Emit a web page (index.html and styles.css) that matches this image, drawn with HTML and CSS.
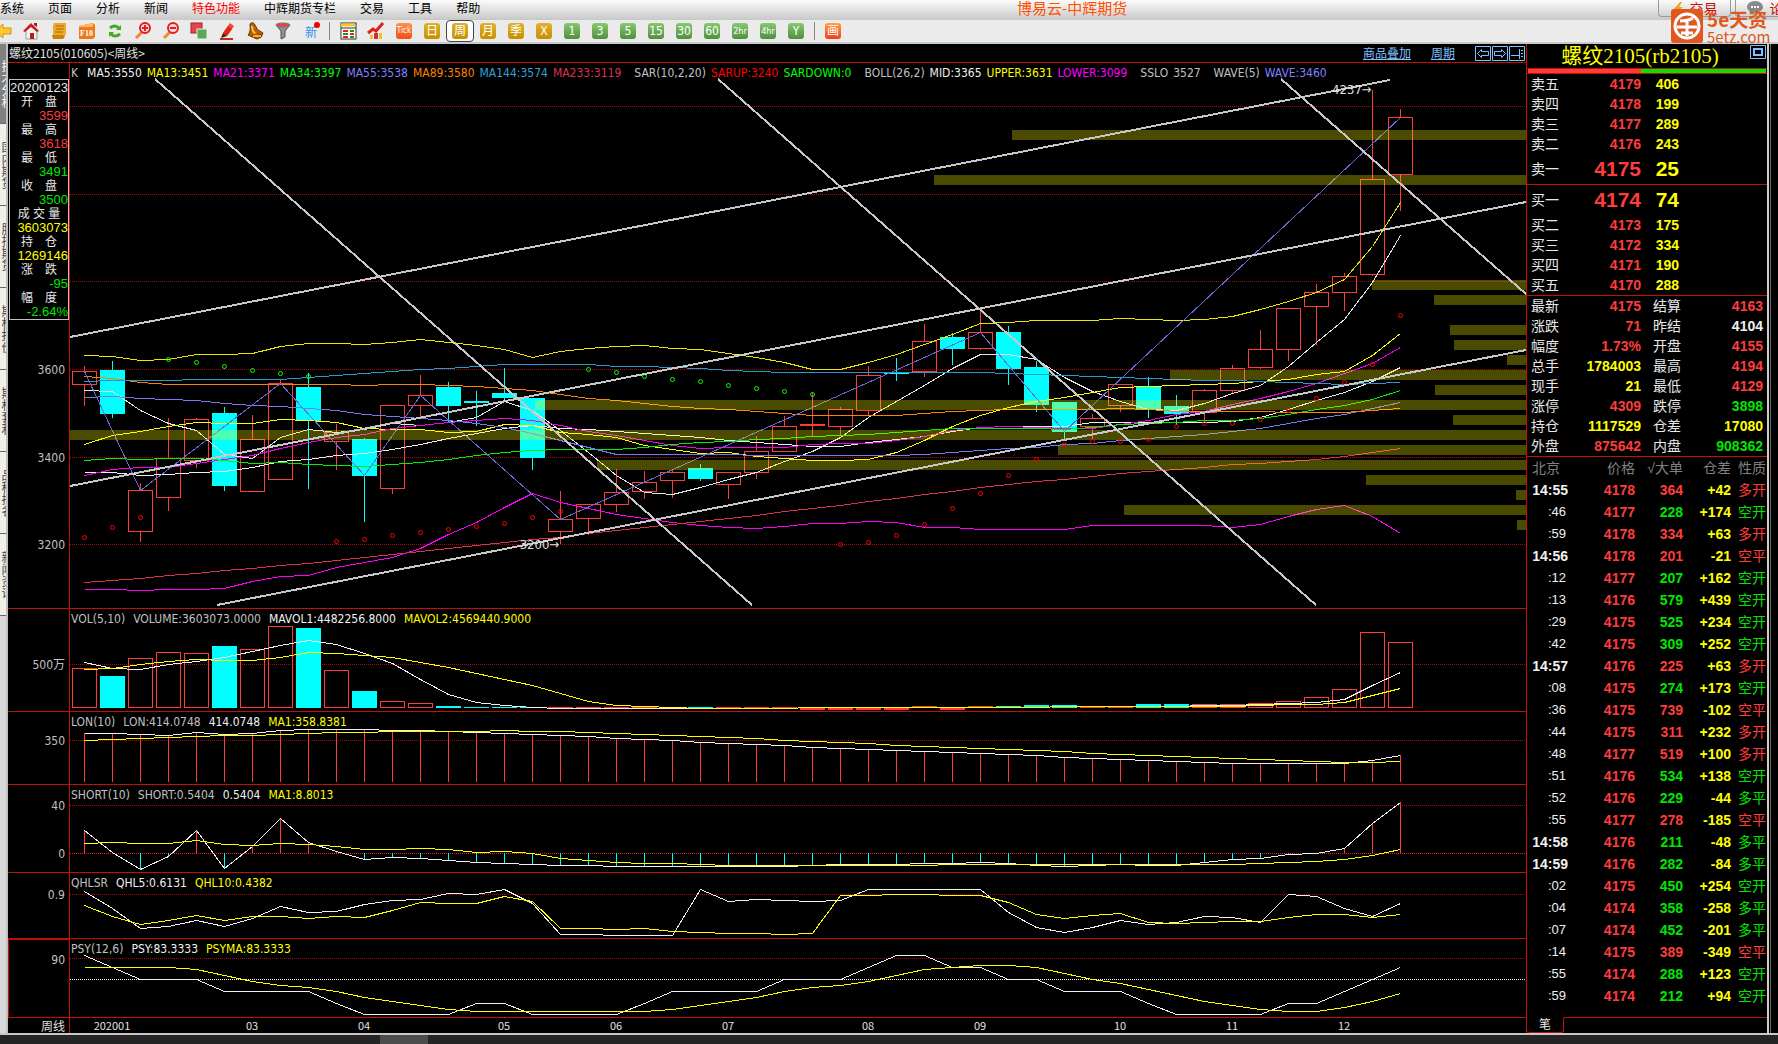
FILE: index.html
```html
<!DOCTYPE html>
<html lang="zh-CN">
<head>
    <meta charset="UTF-8">
    <meta name="viewport" content="width=device-width, initial-scale=1.0">
    <title>博易云-中辉期货</title>
    <link rel="stylesheet" href="styles.css">
</head>
<body>
    <!-- 菜单栏 -->
    <header class="menubar">
        <nav class="menu">
            <a href="#">系统</a>
            <a href="#">页面</a>
            <a href="#">分析</a>
            <a href="#">新闻</a>
            <a href="#" class="hot">特色功能</a>
            <a href="#">中辉期货专栏</a>
            <a href="#">交易</a>
            <a href="#">工具</a>
            <a href="#">帮助</a>
        </nav>
        <h1 class="app-title">博易云-中辉期货</h1>
        <div class="menu-actions">
            <button type="button" class="action">
                <svg width="12" height="12" viewBox="0 0 12 12"><path d="M8 0L1 8h4l-2 4 8-7H7l3-5z" fill="#f0a020"/></svg>交易
            </button>
            <button type="button" class="action">
                <svg width="18" height="14" viewBox="0 0 18 14"><ellipse cx="9" cy="6" rx="8" ry="6" fill="#888"/><path d="M4 9v5l5-3z" fill="#888"/><path d="M5 6h2M8 6h2M11 6h2" stroke="#fff" stroke-width="2"/></svg>论坛
            </button>
        </div>
    </header>

    <!-- 工具栏 -->
    <div class="toolbar">
        <button type="button" aria-label="后退"><svg width="18" height="18" viewBox="0 0 18 18"><path d="M1 9l8-7v4h8v6H9v4z" fill="#ffc830" stroke="#d89010"/></svg></button>
        <button type="button" aria-label="首页"><svg width="18" height="18" viewBox="0 0 18 18"><path d="M4 8v9h11V8L9 4z" fill="#f2f2f2" stroke="#999"/><path d="M1 9l8-8 8 8-2 1-6-5-6 5z" fill="#c41c1c"/><path d="M12 1h3v4l-3-2z" fill="#a01818"/><path d="M8 11h4v6H8z" fill="#b02020"/></svg></button>
        <button type="button" aria-label="资讯"><svg width="18" height="18" viewBox="0 0 18 18"><path d="M4 1h12v10l-2 5H3V4z" fill="#f0a828"/><path d="M6 4h8M6 7h8M5 10h8" stroke="#a86808"/><path d="M2 13h10l3 1-2 3H3z" fill="#c88010"/></svg></button>
        <button type="button" aria-label="F10"><svg width="18" height="18" viewBox="0 0 18 18"><path d="M1 4l14-3 2 2v12l-2 2H1z" fill="#f07818"/><path d="M1 4l14-3v4H1z" fill="#ffb860"/><text x="2" y="14" class="tiny">F10</text></svg></button>
        <button type="button" aria-label="刷新"><svg width="18" height="18" viewBox="0 0 18 18" fill="none" stroke="#48a828" stroke-width="3"><path d="M4 6q5-4 9 0M14 12q-5 4-9 0"/><path d="M10 8h5V3zM8 10H3v5z" fill="#48a828" stroke="none"/></svg></button>
        <button type="button" aria-label="放大"><svg width="18" height="18" viewBox="0 0 18 18"><path d="M2 16l6-6" stroke="#f08830" stroke-width="3"/><circle cx="11" cy="6" r="5" fill="#fdd" stroke="#e02020" stroke-width="2"/><path d="M8 6h6M11 3v6" stroke="#e02020" stroke-width="2"/></svg></button>
        <button type="button" aria-label="缩小"><svg width="18" height="18" viewBox="0 0 18 18"><path d="M2 16l6-6" stroke="#f08830" stroke-width="3"/><circle cx="11" cy="6" r="5" fill="#fdd" stroke="#e02020" stroke-width="2"/><path d="M8 6h6" stroke="#e02020" stroke-width="2"/></svg></button>
        <button type="button" aria-label="叠加"><svg width="18" height="18" viewBox="0 0 18 18"><rect x="1" y="1" width="11" height="10" fill="#e04848" stroke="#a82020"/><rect x="7" y="7" width="10" height="10" fill="#58a858" stroke="#e8f0e8"/></svg></button>
        <button type="button" aria-label="画线"><svg width="18" height="18" viewBox="0 0 18 18"><path d="M5 11L12 1l4 3-7 10z" fill="#f04838"/><path d="M10 4l4 3-5 7-4-3z" fill="#e02818"/><path d="M5 11l4 3-6 2z" fill="#402010"/><path d="M2 17h13" stroke="#c03020" stroke-width="2"/></svg></button>
        <button type="button" aria-label="预警"><svg width="18" height="18" viewBox="0 0 18 18"><path d="M4 2q3-3 5 1 1 5 8 8-1 5-6 6L2 13q3-3 2-11z" fill="#b86008" stroke="#6c2c00"/><path d="M6 4q0 6 5 9" stroke="#f8c840" stroke-width="2" fill="none"/><ellipse cx="11" cy="14" rx="5" ry="2" fill="#f0b020" stroke="#803000"/></svg></button>
        <button type="button" aria-label="筛选"><svg width="18" height="18" viewBox="0 0 18 18"><path d="M2 3l5 6v8l4-2V9l5-6z" fill="#909090" stroke="#555"/><ellipse cx="9" cy="3" rx="7" ry="2" fill="#f04040" stroke="#777"/></svg></button>
        <button type="button" class="new">新</button>
        <i class="sep"></i>
        <button type="button" aria-label="报价"><svg width="18" height="18" viewBox="0 0 18 18"><rect x="2" y="1" width="15" height="16" fill="#fff" stroke="#333"/><path d="M2 3h14" stroke="#f8c820" stroke-width="3"/><path d="M2 6h15" stroke="#333"/><path d="M4 9h5M4 15h5M11 12h4" stroke="#e02020" stroke-width="2"/><path d="M4 12h5M11 9h4M11 15h4" stroke="#209020" stroke-width="2"/></svg></button>
        <button type="button" aria-label="走势"><svg width="18" height="18" viewBox="0 0 18 18"><path d="M3 13h3v4H3zM12 11h3v6h-3z" fill="#f0c030"/><path d="M7 11h4v6H7z" fill="#d03030"/><path d="M1 11l5-4 3 2 7-8" fill="none" stroke="#e02020" stroke-width="3"/></svg></button>
        <button type="button"><b class="key tick">Tick</b></button>
        <button type="button"><b class="key gold">日</b></button>
        <button type="button" class="active"><b class="key gold">周</b></button>
        <button type="button"><b class="key gold">月</b></button>
        <button type="button"><b class="key gold">季</b></button>
        <button type="button"><b class="key gold">X</b></button>
        <button type="button"><b class="key green">1</b></button>
        <button type="button"><b class="key green">3</b></button>
        <button type="button"><b class="key green">5</b></button>
        <button type="button"><b class="key green">15</b></button>
        <button type="button"><b class="key green">30</b></button>
        <button type="button"><b class="key green">60</b></button>
        <button type="button"><b class="key green small">2hr</b></button>
        <button type="button"><b class="key green small">4hr</b></button>
        <button type="button"><b class="key green">Y</b></button>
        <i class="sep"></i>
        <button type="button"><b class="key draw">画</b></button>
    </div>

    <div class="brand">
        <svg width="32" height="34" viewBox="0 0 32 34"><rect width="32" height="34" rx="3" fill="#e05820"/><g fill="none" stroke="#fff" stroke-width="3"><circle cx="16" cy="17" r="12"/><path d="M9 12q8 0 13-3M6 18h20M16 11v16M10 24h12"/></g></svg>
        <div class="brand-text"><strong>5e天资</strong><span>5etz.com</span></div>
    </div>

    <main class="workspace">
        <!-- 左侧页签 -->
        <nav class="side-tabs">
            <a href="#" class="current">技术分析</a>
            <a href="#">国内期货</a>
            <a href="#">股指期货</a>
            <a href="#">期权报价</a>
            <a href="#">期权套利</a>
            <a href="#">品种排名</a>
            <a href="#">新闻资讯</a>
        </nav>

        <!-- K线与指标 -->
        <section class="charts">
            <div class="chart-head">
                <span>螺纹2105(010605)&lt;周线&gt;</span>
                <div class="chart-links">
                    <a href="#">商品叠加</a>
                    <a href="#">周期</a>
                    <div class="nav-icons">
                        <svg width="50" height="15" viewBox="0 0 50 15" fill="none" stroke="#80c0ff"><path d="M.5.5h15v14H.5zM17.500.5h15v14h-15zM34.500.5h15v14h-15z"/><path d="M2.500 7.500l4-4v2h7v4h-7v2zM30.500 7.500l-4-4v2h-7v4h7v2zM36 9.500h8M44.500 3v10M46 4.500h2M46 7.500h2M46 10.500h2"/></svg>
                    </div>
                </div>
            </div>

            <div class="pane" id="main">
                <div class="axis"></div>
                <div class="plot">
                    <svg viewBox="70 63 1456 545" preserveAspectRatio="none"></svg>
                    <div class="legend main-legend">
                        <span>K</span><span class="white first">MA5:3550</span><span class="yellow">MA13:3451</span><span class="magenta">MA21:3371</span><span class="lime">MA34:3397</span><span class="violet">MA55:3538</span><span class="orange">MA89:3580</span><span class="blue">MA144:3574</span><span class="crimson">MA233:3119</span>
                        <span class="lead">SAR(10,2,20)</span><span class="pure-red">SARUP:3240</span><span class="lime">SARDOWN:0</span>
                        <span class="lead">BOLL(26,2)</span><span class="white">MID:3365</span><span class="yellow">UPPER:3631</span><span class="magenta">LOWER:3099</span>
                        <span class="lead">SSLO</span><span>3527</span><span class="lead">WAVE(5)</span><span class="violet">WAVE:3460</span>
                    </div>
                    <span class="mark mark-low">3200→</span>
                    <span class="mark mark-high">4237→</span>
                </div>
                <dl class="bar-info">
                    <dt class="date">20200123</dt>
                    <dt>开　盘</dt><dd class="red">3599</dd>
                    <dt>最　高</dt><dd class="red">3618</dd>
                    <dt>最　低</dt><dd class="green">3491</dd>
                    <dt>收　盘</dt><dd class="green">3500</dd>
                    <dt>成 交 量</dt><dd class="yellow">3603073</dd>
                    <dt>持　仓</dt><dd class="yellow">1269146</dd>
                    <dt>涨　跌</dt><dd class="green">-95</dd>
                    <dt>幅　度</dt><dd class="green">-2.64%</dd>
                </dl>
            </div>

            <div class="pane" id="vol">
                <div class="axis"></div>
                <div class="plot">
                    <svg viewBox="70 609 1456 102" preserveAspectRatio="none"></svg>
                    <div class="legend"><span>VOL(5,10)</span><span>VOLUME:3603073.0000</span><span class="white">MAVOL1:4482256.8000</span><span class="yellow">MAVOL2:4569440.9000</span></div>
                </div>
            </div>

            <div class="pane" id="lon">
                <div class="axis"></div>
                <div class="plot">
                    <svg viewBox="70 712 1456 72" preserveAspectRatio="none"></svg>
                    <div class="legend"><span>LON(10)</span><span>LON:414.0748</span><span class="white">414.0748</span><span class="yellow">MA1:358.8381</span></div>
                </div>
            </div>

            <div class="pane" id="short">
                <div class="axis"></div>
                <div class="plot">
                    <svg viewBox="70 785 1456 87" preserveAspectRatio="none"></svg>
                    <div class="legend"><span>SHORT(10)</span><span>SHORT:0.5404</span><span class="white">0.5404</span><span class="yellow">MA1:8.8013</span></div>
                </div>
            </div>

            <div class="pane" id="qhl">
                <div class="axis"></div>
                <div class="plot">
                    <svg viewBox="70 873 1456 65" preserveAspectRatio="none"></svg>
                    <div class="legend"><span>QHLSR</span><span class="white">QHL5:0.6131</span><span class="yellow">QHL10:0.4382</span></div>
                </div>
            </div>

            <div class="pane selected" id="psy">
                <div class="axis"></div>
                <div class="plot">
                    <svg viewBox="70 939 1456 78" preserveAspectRatio="none"></svg>
                    <div class="legend"><span>PSY(12,6)</span><span class="white">PSY:83.3333</span><span class="yellow">PSYMA:83.3333</span></div>
                </div>
            </div>

            <div class="time-row">
                <div class="period">周线</div>
                <div class="months" id="months"></div>
            </div>
        </section>

        <!-- 报价 -->
        <aside class="quote">
            <div class="quote-head">
                <h2>螺纹2105(rb2105)</h2>
                <button type="button" aria-label="最大化"><svg width="16" height="14" viewBox="0 0 16 14" fill="none" stroke="#80c0ff"><path d="M.5.5h15v13H.5z"/><path d="M4 4h8v6H4z" stroke-width="2"/></svg></button>
            </div>
            <div class="ratio"><i class="bulls"></i><i class="bears"></i></div>

            <table class="book">
                <tr><th>卖五</th><td class="red">4179</td><td class="yellow">406</td><td></td></tr>
                <tr><th>卖四</th><td class="red">4178</td><td class="yellow">199</td><td></td></tr>
                <tr><th>卖三</th><td class="red">4177</td><td class="yellow">289</td><td></td></tr>
                <tr><th>卖二</th><td class="red">4176</td><td class="yellow">243</td><td></td></tr>
                <tr class="best"><th>卖一</th><td class="red">4175</td><td class="yellow">25</td><td></td></tr>
            </table>
            <table class="book">
                <tr class="best"><th>买一</th><td class="red">4174</td><td class="yellow">74</td><td></td></tr>
                <tr><th>买二</th><td class="red">4173</td><td class="yellow">175</td><td></td></tr>
                <tr><th>买三</th><td class="red">4172</td><td class="yellow">334</td><td></td></tr>
                <tr><th>买四</th><td class="red">4171</td><td class="yellow">190</td><td></td></tr>
                <tr><th>买五</th><td class="red">4170</td><td class="yellow">288</td><td></td></tr>
            </table>
            <table class="stats">
                <tr><th>最新</th><td class="red">4175</td><th>结算</th><td class="red">4163</td></tr>
                <tr><th>涨跌</th><td class="red">71</td><th>昨结</th><td class="white">4104</td></tr>
                <tr><th>幅度</th><td class="red">1.73%</td><th>开盘</th><td class="red">4155</td></tr>
                <tr><th>总手</th><td class="yellow">1784003</th><th>最高</th><td class="red">4194</td></tr>
                <tr><th>现手</th><td class="yellow">21</td><th>最低</th><td class="red">4129</td></tr>
                <tr><th>涨停</th><td class="red">4309</td><th>跌停</th><td class="green">3898</td></tr>
                <tr><th>持仓</th><td class="yellow">1117529</td><th>仓差</th><td class="yellow">17080</td></tr>
                <tr><th>外盘</th><td class="red">875642</td><th>内盘</th><td class="green">908362</td></tr>
            </table>
            <table class="ticks">
                <thead><tr><th>北京</th><th>价格</th><th>√大单</th><th>仓差</th><th>性质</th></tr></thead>
                <tbody id="ticks"></tbody>
            </table>
            <div class="quote-tabs"><button type="button">笔</button></div>
        </aside>
        <div class="edge"></div>
    </main>
    <footer class="taskbar"><i></i></footer>

    <script src="chart.js"></script>
</body>
</html>
```
FILE: styles.css
```css
/* 通用 */
* {
    box-sizing: border-box;
}

body {
    margin: 0;
    height: 100vh;
    display: flex;
    flex-direction: column;
    overflow: hidden;
    background: #000;
    color: #c0c0c0;
    font-family: "DejaVu Sans Condensed", "Noto Sans CJK SC", sans-serif;
    font-size: 12px;
}

button {
    border: 0;
    padding: 0;
    background: none;
    font: inherit;
    color: inherit;
}

table {
    width: 100%;
    border-collapse: collapse;
    table-layout: fixed;
}

th, td {
    padding: 0;
    font-weight: normal;
}

.white { color: #f0f0f0; }
.yellow { color: #ffff00; }
.magenta { color: #ff00ff; }
.lime { color: #00ff00; }
.green { color: #00e600; }
.violet { color: #8080ff; }
.orange { color: #ff8000; }
.blue { color: #30a0d8; }
.crimson { color: #dc3250; }
.red { color: #ff3c3c; }
.pure-red { color: #ff0000; }

/* 菜单栏 */
.menubar {
    position: relative;
    display: flex;
    justify-content: space-between;
    flex: none;
    height: 20px;
    background: linear-gradient(#fbfbfb, #c8c8c8);
    color: #000;
    font-family: "Noto Sans CJK SC", sans-serif;
}

.menu {
    display: flex;
    gap: 24px;
    line-height: 16px;
}

.menu a {
    color: #000;
    text-decoration: none;
}

.menu .hot {
    color: #ff0000;
}

.app-title {
    position: absolute;
    left: 60.3%;
    transform: translateX(-50%);
    margin: 0;
    line-height: 16px;
    font-size: 15px;
    font-weight: normal;
    color: #ff5000;
    white-space: nowrap;
}

.menu-actions {
    display: flex;
    gap: 4px;
    width: 120px;
    overflow: hidden;
}

.action {
    display: flex;
    flex: none;
    align-items: center;
    justify-content: center;
    gap: 6px;
    width: 73px;
    height: 17px;
    border: 1px solid #999;
    border-top: 0;
    border-radius: 0 0 4px 4px;
    line-height: 12px;
    font-size: 14px;
    color: #c81010;
}

/* 工具栏 */
.toolbar {
    display: flex;
    align-items: center;
    flex: none;
    height: 24px;
    margin-left: -11px;
    background: #ebebeb;
    border-bottom: 2px solid #c8c8c8;
}

.toolbar button {
    display: flex;
    align-items: center;
    justify-content: center;
    width: 28px;
    height: 22px;
}

.toolbar .active {
    border: 1px solid #444;
    border-radius: 4px;
    background: #fff;
}

.sep {
    width: 1px;
    height: 18px;
    margin: 0 4px;
    background: #888;
}

.tiny {
    font: bold 8px "Liberation Serif", serif;
    fill: #fff;
}

.toolbar .new {
    position: relative;
    font-size: 12px;
    color: #3090f0;
}

.new::after {
    content: "";
    position: absolute;
    top: 2px;
    right: 5px;
    width: 6px;
    height: 6px;
    border-radius: 50%;
    background: #f00000;
}

.key {
    width: 16px;
    height: 16px;
    border-radius: 3px;
    line-height: 16px;
    text-align: center;
    font-size: 12px;
    font-weight: normal;
    color: #fff;
}

.gold { background: linear-gradient(#e0b030, #c89000); }
.green.key { background: linear-gradient(#88c870, #509040); }
.tick { background: linear-gradient(#ff9050, #f05010); font-size: 8px; }
.draw { background: linear-gradient(#ffa040, #f04020); }
.small { font-size: 9px; }

/* 站点标志 */
.brand {
    position: absolute;
    top: 9px;
    right: 3px;
    display: flex;
    gap: 4px;
    height: 34px;
    color: #e05820;
    font-family: "Noto Sans CJK SC", sans-serif;
}

.brand-text {
    width: 68px;
    white-space: nowrap;
}

.brand-text strong {
    display: block;
    font-size: 19px;
    line-height: 20px;
}

.brand-text span {
    display: block;
    font-size: 15px;
    line-height: 15px;
}

/* 主体 */
.workspace {
    flex: 1;
    display: flex;
    min-height: 0;
}

.side-tabs {
    width: 8px;
    flex: none;
    overflow: hidden;
    background: #d8d8d8;
    border-right: 2px solid #c0c0c0;
}

.side-tabs a {
    display: flex;
    align-items: flex-start;
    justify-content: center;
    height: 82px;
    padding-right: 2px;
    border-bottom: 1px solid #666;
    border-radius: 0 0 6px 0;
    background: #f0f0e8;
    writing-mode: vertical-rl;
    text-decoration: none;
    line-height: 12px;
    white-space: nowrap;
    color: #444;
}

.side-tabs .current {
    height: 80px;
    background: #808080;
    color: #fff;
}

.charts {
    flex: 1;
    min-width: 0;
    display: grid;
    grid-template-rows: 19px 546fr 103fr 73fr 88fr 66fr 79fr 15px;
}

.chart-head {
    display: flex;
    justify-content: space-between;
    padding: 0 1px;
    border-bottom: 1px solid #c01008;
    line-height: 18px;
    font-family: "Noto Sans CJK SC", sans-serif;
    color: #e0e0e0;
}

.chart-links {
    display: flex;
    align-items: center;
    gap: 20px;
}

.chart-links a {
    color: #80c0ff;
    line-height: 16px;
}

.nav-icons {
    display: flex;
}

.pane {
    position: relative;
    display: grid;
    grid-template-columns: 62px 1fr;
    min-height: 0;
    border-bottom: 1px solid #c01008;
}

.axis {
    position: relative;
    border-right: 1px solid #c01008;
}

.axis span {
    position: absolute;
    right: 4px;
    margin-top: -7px;
    line-height: 16px;
}

.selected .axis {
    border: 1px solid #c01008;
    border-bottom: 0;
}

.plot {
    position: relative;
    min-width: 0;
    min-height: 0;
}

.plot svg {
    position: absolute;
    width: 100%;
    height: 100%;
    shape-rendering: crispEdges;
}

.legend {
    position: absolute;
    top: 1px;
    left: 1px;
    display: flex;
    gap: 8px;
    line-height: 18px;
    white-space: nowrap;
}

.main-legend {
    gap: 5px;
}

.main-legend .first {
    margin-left: 4px;
}

.main-legend .lead {
    margin-left: 8px;
}

.mark {
    position: absolute;
    line-height: 16px;
    font-size: 13px;
    color: #e0e0e0;
}

.mark-low {
    right: 66.4%;
    top: 87%;
}

.mark-high {
    right: 10.6%;
    top: 3.5%;
}

/* 当前K线数据 */
.bar-info {
    position: absolute;
    left: 1px;
    top: 16px;
    width: 60px;
    margin: 0;
    border: 1px solid #c0c0c0;
    background: #000;
    line-height: 14px;
    font-family: "Liberation Sans", "Noto Sans CJK SC", sans-serif;
}

.bar-info dt {
    text-align: center;
    color: #e8e8e8;
}

.bar-info dd {
    margin: 0;
    text-align: right;
    font-size: 13px;
}

.bar-info .date {
    line-height: 15px;
    font-size: 13px;
}

.time-row {
    display: grid;
    grid-template-columns: 62px 1fr;
    line-height: 15px;
    font-family: "Noto Sans CJK SC", sans-serif;
    color: #e0e0e0;
}

.period {
    padding-right: 4px;
    text-align: right;
    border-right: 1px solid #c01008;
}

.months {
    position: relative;
    font-size: 11px;
}

.months span {
    position: absolute;
    width: 40px;
    margin-left: -20px;
    text-align: center;
}

/* 报价面板 */
.quote {
    display: flex;
    flex-direction: column;
    flex: none;
    width: 241px;
    border-left: 1px solid #c01008;
    font-family: "Liberation Sans", "Noto Sans CJK SC", sans-serif;
    font-size: 14px;
}

.quote-head {
    position: relative;
    height: 24px;
}

.quote-head h2 {
    margin: 0;
    padding-right: 14px;
    text-align: center;
    font: normal 21px/24px "Liberation Serif", "Noto Sans CJK SC", serif;
    color: #ffff00;
}

.quote-head button {
    position: absolute;
    top: 1px;
    right: 1px;
    height: 14px;
    line-height: 0;
}

.ratio {
    display: flex;
    height: 6px;
    padding: 0 1px;
    border-top: 1px solid #c01008;
    border-bottom: 1px solid #c01008;
}

.bulls {
    flex: 113;
    background: #ff3c3c;
}

.bears {
    flex: 125;
    background: #00e600;
}

.book, .stats {
    border-bottom: 1px solid #c01008;
}

.quote tr {
    height: 20px;
    line-height: 20px;
}

.quote .best {
    height: 30px;
    line-height: 30px;
}

.quote th {
    text-align: left;
    color: #e8e8e8;
}

.quote td {
    text-align: right;
    font-weight: bold;
}

.book th {
    width: 50px;
    padding-left: 4px;
}

.book td:nth-child(2) {
    width: 64px;
}

.book td:nth-child(3) {
    width: 38px;
}

.best td {
    font-size: 21px;
}

.stats th {
    width: 36px;
    padding-left: 4px;
}

.stats td:nth-child(2) {
    width: 78px;
}

.stats th:nth-child(3) {
    width: 48px;
    padding-left: 12px;
}

.stats td:nth-child(4) {
    padding-right: 4px;
}

.quote .ticks tr {
    height: 22px;
    line-height: 22px;
}

.quote .ticks th {
    text-align: right;
    color: #808080;
    white-space: nowrap;
}

.quote .ticks th:first-child {
    width: 41px;
    padding-left: 5px;
    text-align: left;
}

.ticks th:nth-child(2) {
    width: 67px;
}

.ticks th:nth-child(3),
.ticks th:nth-child(4) {
    width: 48px;
}

.ticks th:nth-child(5),
.ticks td:nth-child(5) {
    padding-right: 1px;
    font-weight: normal;
}

.ticks .second {
    padding-right: 2px;
    font-size: 13px;
    font-weight: normal;
}

.quote-tabs {
    height: 16px;
    margin-top: auto;
    border-top: 1px solid #c01008;
}

.quote-tabs button {
    display: block;
    width: 37px;
    height: 16px;
    margin-top: -1px;
    border: 1px solid #c01008;
    border-top-color: #000;
    border-left: 0;
    border-radius: 0 0 3px 3px;
    background: #000;
    line-height: 12px;
    font-size: 12px;
    color: #e8e8e8;
}

.edge {
    flex: none;
    width: 11px;
    border-left: 2px solid #d0ccc4;
    box-shadow: inset 1px 0 #000, inset 2px 0 #666;
}

.taskbar {
    flex: none;
    height: 11px;
    border-top: 2px solid #c8c8c8;
    background: #242424;
}

.taskbar i {
    display: block;
    width: 48px;
    height: 9px;
    margin-left: 380px;
    background: #4c4c4c;
}
```
FILE: chart.js
```javascript
const SVG_NS = "http://www.w3.org/2000/svg";
const LEFT = 70;
const WIDTH = 1456;
const RED = "#ff3c3c";
const CYAN = "#00ffff";

// 第 i 根K线的中心
const barX = i => 84 + 28 * i;

function add(svg, tag, attrs) {
    const el = document.createElementNS(SVG_NS, tag);
    for (const key in attrs) el.setAttribute(key, attrs[key]);
    svg.appendChild(el);
}

function segment(svg, x1, y1, x2, y2, stroke, extra) {
    add(svg, "line", { x1, y1, x2, y2, stroke, ...extra });
}

function poly(svg, points, stroke) {
    const list = points.map(p => (p[0] + 0.5) + "," + (p[1] + 0.5)).join(" ");
    add(svg, "polyline", { points: list, fill: "none", stroke });
}

function series(svg, values, stroke) {
    poly(svg, values.map((y, i) => [barX(i), y]), stroke);
}

// 网格线和左侧刻度
function gridLine(svg, y, label, color) {
    segment(svg, LEFT, y + 0.5, LEFT + WIDTH, y + 0.5, color || "#a80808", { "stroke-dasharray": "1 1" });
    if (!label) return;
    const box = svg.viewBox.baseVal;
    const tick = document.createElement("span");
    tick.textContent = label;
    tick.style.top = (y - box.y) / box.height * 100 + "%";
    svg.closest(".pane").querySelector(".axis").appendChild(tick);
}

function body(svg, i, top, bottom, up) {
    const x = barX(i) - 12;
    if (up) {
        add(svg, "rect", { x: x + 0.5, y: top + 0.5, width: 24, height: Math.max(bottom - top, 1), fill: "none", stroke: RED });
    } else {
        add(svg, "rect", { x, y: top, width: 25, height: bottom - top + 1, fill: CYAN });
    }
}

// 方向, 最高, 实体上沿, 实体下沿, 最低
const candles = [
    [1, 366, 371, 384, 406], [0, 361, 370, 413, 418], [1, 483, 490, 531, 542], [1, 418, 458, 497, 511],
    [1, 418, 419, 460, 468], [0, 407, 413, 485, 491], [1, 415, 439, 491, 491], [1, 379, 383, 479, 479],
    [0, 373, 387, 420, 489], [1, 424, 432, 441, 470], [0, 438, 439, 475, 522], [1, 405, 405, 488, 494],
    [1, 375, 395, 405, 417], [0, 382, 387, 405, 422], [0, 391, 401, 402, 426], [0, 368, 393, 397, 401],
    [0, 398, 398, 457, 470], [1, 491, 519, 531, 544], [1, 504, 504, 518, 535], [1, 469, 492, 504, 512],
    [1, 471, 482, 491, 499], [1, 470, 472, 480, 498], [0, 464, 468, 478, 481], [1, 472, 472, 484, 499],
    [1, 436, 451, 472, 479], [1, 416, 426, 451, 451], [1, 393, 424, 425, 436], [1, 407, 409, 426, 435],
    [1, 366, 375, 410, 415], [0, 358, 373, 373, 381], [1, 324, 341, 371, 377], [0, 333, 337, 348, 365],
    [1, 310, 332, 348, 350], [0, 326, 332, 368, 385], [0, 361, 367, 404, 412], [0, 402, 402, 431, 441],
    [1, 414, 418, 426, 439], [1, 384, 384, 405, 412], [0, 377, 387, 408, 418], [0, 395, 406, 413, 425],
    [1, 389, 390, 412, 423], [1, 365, 368, 390, 394], [1, 330, 349, 367, 369], [1, 308, 308, 349, 361],
    [1, 284, 292, 306, 345], [1, 273, 276, 292, 311], [1, 90, 179, 274, 276], [1, 109, 117, 174, 211]
];

// 主图均线和布林带
const mainLines = {
    "#e8e800": [355,356,360,359,354,354,353,346,343,343,344,342,339,342,345,349,357,351,348,346,345,348,349,353,357,362,369,369,362,354,344,334,323,322,320,320,320,318,319,320,319,316,309,301,292,279,246,202],
    "#f0f0f0": [472,472,475,474,472,471,467,461,459,455,453,449,444,438,433,428,425,428,429,431,433,435,437,440,442,444,446,446,442,439,436,431,427,426,426,426,422,422,422,422,422,421,417,409,400,392,381,367],
    "#ff00ff": [589,589,590,589,589,588,581,576,575,567,562,557,548,534,522,507,493,502,508,514,518,522,525,527,528,526,523,523,521,522,527,527,529,529,529,529,525,525,525,525,525,527,524,516,509,505,516,533],
    "#e6e6e6": [390,391,410,423,430,454,458,437,429,432,429,423,425,422,417,401,410,430,452,475,492,494,487,479,472,461,451,437,417,401,385,368,354,354,359,377,391,401,409,410,403,393,385,366,342,319,282,235],
    "#ffff00": [444,435,431,426,422,423,423,419,420,422,428,429,429,432,431,424,425,432,434,437,445,449,453,452,456,458,460,460,459,452,440,426,415,407,401,397,392,387,386,385,384,383,381,379,374,371,355,333],
    "#f000f0": [475,469,467,467,463,459,455,448,442,437,434,428,425,422,420,418,420,425,431,435,440,445,448,447,447,447,444,443,443,440,436,430,427,426,427,428,428,424,420,414,411,404,398,391,383,373,363,347],
    "#00f000": [460,458,459,458,458,460,463,462,464,465,466,464,462,459,455,452,450,449,449,449,447,444,442,441,439,438,436,435,434,432,430,428,428,428,428,429,427,424,423,422,420,420,418,414,409,405,399,390],
    "#7878f0": [397,396,398,399,400,403,405,406,408,410,414,416,418,420,423,427,433,440,447,454,454,454,454,454,455,455,455,455,455,455,454,452,450,448,447,444,443,440,438,436,434,431,428,423,418,414,408,402],
    "#ff8000": [376,378,382,384,384,384,384,384,384,384,385,384,384,385,386,388,390,394,398,400,403,406,408,409,411,413,415,415,415,415,413,411,410,409,409,409,409,408,409,411,411,411,411,412,412,412,410,408],
    "#2898d0": [381,380,380,380,379,379,379,379,377,375,373,371,369,368,366,364,364,364,364,366,366,367,368,370,371,372,372,372,372,372,372,372,372,373,374,375,376,377,378,379,380,380,381,382,383,384,383,382],
    "#dc3250": [582,580,578,575,573,570,568,565,563,560,557,554,551,548,545,542,539,537,533,530,527,524,521,518,515,511,508,505,501,498,494,491,487,484,481,479,476,473,471,469,467,464,463,461,459,456,452,448]
};

const wave = [[84,371],[140,490],[280,383],[364,475],[420,395],[560,519],[980,332],[1064,431],[1400,117]];

// 手工画的趋势线
const trends = [
    [70,337,1390,80], [155,79,752,605], [70,486,1526,202],
    [217,605,1526,350], [718,79,1316,605], [1281,79,1526,294]
];

// 分价成交量, 每 15px 一档
const profile = [
    [130,1012], [175,934], [280,1372], [295,1434], [325,1450], [340,1454], [355,1507], [370,1170], [385,1435],
    [400,535], [415,1453], [430,70], [445,1058], [460,597], [475,1366], [490,1516], [505,1124], [520,1517]
];

const sarDown = { 3:359, 4:362, 5:366, 6:370, 7:373, 8:376, 18:369, 19:372, 20:376, 21:379, 22:381, 23:385, 24:388, 25:391, 26:394 };
const sarUp = {
    0:537, 1:527, 2:517, 9:541, 10:539, 11:535, 12:532, 13:529, 14:526, 15:523, 16:517, 17:511,
    27:544, 28:542, 29:535, 30:524, 31:508, 32:493, 33:475, 34:459, 35:444, 36:441, 37:441, 38:439, 39:426,
    40:423, 41:423, 42:419, 43:410, 44:398, 45:382, 46:364, 47:315
};

function drawDots(svg, dots, stroke) {
    for (const i in dots) {
        add(svg, "circle", { cx: barX(+i) + 0.5, cy: dots[i] + 0.5, r: 2, fill: "none", stroke, "shape-rendering": "auto" });
    }
}

function drawMain() {
    const svg = document.querySelector("#main svg");
    [106, 194, 281].forEach(y => gridLine(svg, y));
    gridLine(svg, 369, "3600");
    gridLine(svg, 457, "3400");
    gridLine(svg, 544, "3200");
    candles.forEach(([up, high, top, bottom, low], i) => {
        const x = barX(i) + 0.5;
        const color = up ? RED : CYAN;
        if (high < top) segment(svg, x, high, x, top, color);
        if (low > bottom) segment(svg, x, bottom, x, low, color);
        body(svg, i, top, bottom, up);
    });
    for (const color in mainLines) series(svg, mainLines[color], color);
    poly(svg, wave, "#6868d8");
    profile.forEach(([y, x]) => {
        add(svg, "rect", { x, y, width: LEFT + WIDTH - x, height: 10, fill: "#ffff00", "fill-opacity": 0.29 });
    });
    drawDots(svg, sarDown, "#00ff00");
    drawDots(svg, sarUp, "#ff0000");
    trends.forEach(([x1, y1, x2, y2]) => segment(svg, x1, y1, x2, y2, "#c8c8c8", { "stroke-width": 2 }));
}

// 成交量
const volumeTop = [668,676,658,652,653,646,649,626,628,670,691,701,703,706,707,707,707,707,707,707,707,707,707,707,707,707,708,708,708,708,706,708,706,706,705,705,706,706,704,704,704,704,703,701,697,689,632,642];
const volumeDown = [1, 5, 8, 10, 13, 14, 15, 16, 22, 33, 34, 35, 38, 39];
const mavol1 = [662,668,669,664,661,657,651,645,640,644,653,663,679,694,702,705,707,708,708,708,708,708,708,708,708,708,707,707,707,707,707,707,707,707,707,706,706,706,706,706,705,705,704,703,702,699,685,672];
const mavol2 = [669,668,664,661,659,660,660,657,652,653,655,657,662,667,673,679,685,693,701,705,706,707,708,708,708,708,707,707,707,707,707,707,707,707,707,706,706,706,706,706,706,706,705,704,704,702,695,688];

function drawVolume() {
    const svg = document.querySelector("#vol svg");
    gridLine(svg, 664, "500万");
    volumeTop.forEach((top, i) => body(svg, i, top, 707, !volumeDown.includes(i)));
    series(svg, mavol1, "#f0f0f0");
    series(svg, mavol2, "#ffff00");
}

const lon = [733,733,734,735,732,734,733,730,729,729,729,730,730,731,732,733,734,735,736,738,739,740,742,743,744,745,747,748,749,750,751,752,753,754,755,757,758,759,760,761,762,763,763,763,763,763,760,755];
const lonMa = [740,739,738,737,736,735,735,734,733,732,732,731,731,731,731,730,731,731,732,733,734,735,736,737,738,740,741,742,743,745,746,747,748,749,750,751,753,754,755,756,757,758,759,760,761,762,762,761];

function drawLon() {
    const svg = document.querySelector("#lon svg");
    gridLine(svg, 740, "350");
    lon.forEach((y, i) => segment(svg, barX(i) + 0.5, y, barX(i) + 0.5, 782, RED));
    series(svg, lon, "#f0f0f0");
    series(svg, lonMa, "#ffff00");
}

const short = [830,852,869,856,830,868,846,818,842,851,859,857,858,860,862,863,864,865,865,866,866,866,866,866,866,866,865,864,864,864,863,863,862,863,865,866,865,864,865,865,862,859,858,854,853,848,823,802];
const shortMa = [843,842,843,843,840,844,845,843,844,846,849,849,848,849,852,851,853,858,860,862,863,863,864,865,865,865,865,865,865,865,865,864,864,864,864,864,864,864,864,864,864,864,863,862,861,859,855,849];

function drawShort() {
    const svg = document.querySelector("#short svg");
    gridLine(svg, 805, "40");
    gridLine(svg, 853, "0", "#e02020");
    short.forEach((y, i) => segment(svg, barX(i) + 0.5, 853, barX(i) + 0.5, y, y < 853 ? RED : CYAN));
    series(svg, short, "#f0f0f0");
    series(svg, shortMa, "#ffff00");
}

const qhl5 = [891,908,928,926,920,926,918,906,912,911,904,900,899,893,894,889,903,934,934,935,935,935,889,901,899,900,901,900,889,889,889,889,889,912,927,932,927,920,924,922,916,917,922,894,896,908,916,903];
const qhl10 = [905,916,924,920,915,920,916,916,918,916,917,910,902,903,903,896,901,928,928,929,928,931,932,933,933,934,933,895,895,894,894,895,895,902,914,918,915,913,922,923,922,921,921,917,914,914,917,914];

function drawQhl() {
    const svg = document.querySelector("#qhl svg");
    gridLine(svg, 894, "0.9");
    series(svg, qhl5, "#f0f0f0");
    series(svg, qhl10, "#ffff00");
}

const psy = [955,967,979,979,979,991,991,991,991,1003,1014,1014,1014,1014,1003,1003,1014,1014,1014,1014,1003,991,991,991,991,979,979,979,967,955,955,967,967,979,979,991,991,991,1003,1014,1014,1014,1014,1003,1003,991,979,967];
const psyMa = [967,967,967,967,969,975,981,985,987,991,997,1001,1005,1009,1011,1011,1011,1011,1011,1011,1011,1009,1005,1001,997,991,987,985,981,975,969,967,965,965,967,973,979,983,989,995,1001,1005,1009,1011,1011,1007,1001,993];

function drawPsy() {
    const svg = document.querySelector("#psy svg");
    gridLine(svg, 958, "90");
    gridLine(svg, 979, "", "#ffffff");
    series(svg, psy, "#f0f0f0");
    series(svg, psyMa, "#ffff00");
}

const months = { 1: "202001", 6: "03", 10: "04", 15: "05", 19: "06", 23: "07", 28: "08", 32: "09", 37: "10", 41: "11", 45: "12" };

function drawMonths() {
    const row = document.getElementById("months");
    for (const i in months) {
        const label = document.createElement("span");
        label.textContent = months[i];
        label.style.left = (barX(+i) - LEFT) / WIDTH * 100 + "%";
        row.appendChild(label);
    }
}

// 时间, 价格, 手数, 仓差, 性质, 颜色
const ticks = [
    ["14:55", 4178, 364, "+42", "多开", "red"], [":46", 4177, 228, "+174", "空开", "green"],
    [":59", 4178, 334, "+63", "多开", "red"], ["14:56", 4178, 201, "-21", "空平", "red"],
    [":12", 4177, 207, "+162", "空开", "green"], [":13", 4176, 579, "+439", "空开", "green"],
    [":29", 4175, 525, "+234", "空开", "green"], [":42", 4175, 309, "+252", "空开", "green"],
    ["14:57", 4176, 225, "+63", "多开", "red"], [":08", 4175, 274, "+173", "空开", "green"],
    [":36", 4175, 739, "-102", "空平", "red"], [":44", 4175, 311, "+232", "多开", "red"],
    [":48", 4177, 519, "+100", "多开", "red"], [":51", 4176, 534, "+138", "空开", "green"],
    [":52", 4176, 229, "-44", "多平", "green"], [":55", 4177, 278, "-185", "空平", "red"],
    ["14:58", 4176, 211, "-48", "多平", "green"], ["14:59", 4176, 282, "-84", "多平", "green"],
    [":02", 4175, 450, "+254", "空开", "green"], [":04", 4174, 358, "-258", "多平", "green"],
    [":07", 4174, 452, "-201", "多平", "green"], [":14", 4175, 389, "-349", "空平", "red"],
    [":55", 4174, 288, "+123", "空开", "green"], [":59", 4174, 212, "+94", "空开", "green"]
];

function fillTicks() {
    document.getElementById("ticks").innerHTML = ticks.map(([time, price, lots, diff, kind, color]) => `
        <tr>
            <td class="white ${time[0] === ":" ? "second" : ""}">${time}</td>
            <td class="red">${price}</td>
            <td class="${color}">${lots}</td>
            <td class="yellow">${diff}</td>
            <td class="${color}">${kind}</td>
        </tr>`).join("");
}

drawMain();
drawVolume();
drawLon();
drawShort();
drawQhl();
drawPsy();
drawMonths();
fillTicks();
```
